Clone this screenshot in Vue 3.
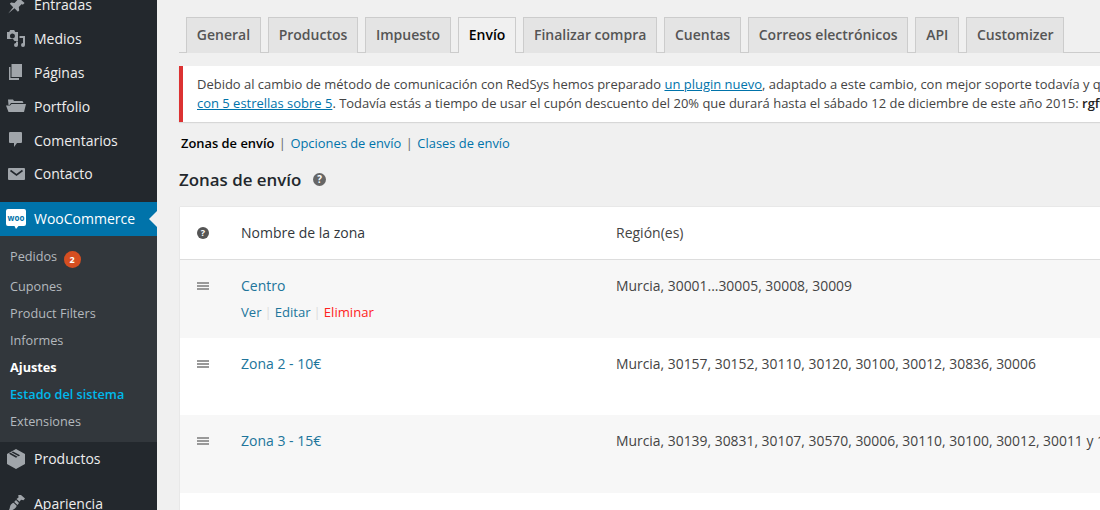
<script setup>
const menuTop = [
  { label: 'Entradas', icon: 'pin' },
  { label: 'Medios', icon: 'media' },
  { label: 'Páginas', icon: 'pages' },
  { label: 'Portfolio', icon: 'folder' },
  { label: 'Comentarios', icon: 'comment' },
  { label: 'Contacto', icon: 'mail' },
]
const sub = [
  { label: 'Pedidos', badge: '2', cls: 'first' },
  { label: 'Cupones' },
  { label: 'Product Filters' },
  { label: 'Informes' },
  { label: 'Ajustes', cls: 'current' },
  { label: 'Estado del sistema', cls: 'hover' },
  { label: 'Extensiones' },
]
const tabs = ['General', 'Productos', 'Impuesto', 'Envío', 'Finalizar compra', 'Cuentas', 'Correos electrónicos', 'API', 'Customizer']
const zones = [
  { name: 'Centro', region: 'Murcia, 30001...30005, 30008, 30009', actions: true },
  { name: 'Zona 2 - 10€', region: 'Murcia, 30157, 30152, 30110, 30120, 30100, 30012, 30836, 30006' },
  { name: 'Zona 3 - 15€', region: 'Murcia, 30139, 30831, 30107, 30570, 30006, 30110, 30100, 30012, 30011 y 1 más' },
]
</script>

<template>
  <div class="page">
    <aside class="sidebar">
      <ul class="menu">
        <li v-for="m in menuTop" :key="m.label" class="item">
          <svg class="ico" viewBox="0 0 20 20" aria-hidden="true">
            <path v-if="m.icon === 'pin'" d="M10.400 4.200l1.800-1.800 6.400 5.600-1.800 1.800-1-.8-3 3 .4 3.400-1.300 1.300-3.400-3.400L2.200 18.500l5-6.300-3.400-3.400 1.300-1.300 3.400.4 3-3z" />
            <path v-else-if="m.icon === 'media'" fill-rule="evenodd" d="M1 3h2.200l1-2h4l1 2H12v9H8.500L7 10H1V3zm5.500 1.500a2.500 2.500 0 1 0 0 5 2.500 2.500 0 0 0 0-5zM13.500 7H19v9a2 2 0 1 1-2-2V9h-3.500V7zM12 12.500v3.500a2 2 0 1 1-2-2V12.500h2z" />
            <path v-else-if="m.icon === 'pages'" d="M5.500 2H16v13H5.500V2zM3 5h1.500v11H13v2H3V5z" />
            <path v-else-if="m.icon === 'folder'" d="M2 3.500h5l1 1.500h8.500l1 2H5L3.500 9H2.500L2 3.500zM5.500 8H20l-2 8H2.500L0 9.500h4L5.500 8z" />
            <path v-else-if="m.icon === 'comment'" d="M4 2h11a1 1 0 0 1 1 1v9a1 1 0 0 1-1 1h-4l-3 4v-4H4a1 1 0 0 1-1-1V3a1 1 0 0 1 1-1z" />
            <template v-else>
              <path d="M3 4h15a1 1 0 0 1 1 1v10a1 1 0 0 1-1 1H3a1 1 0 0 1-1-1V5a1 1 0 0 1 1-1z" />
              <path d="M4.500 6.500l6 4.500 6-4.500" fill="none" stroke="#23282d" stroke-width="1.600" />
            </template>
          </svg>
          <span>{{ m.label }}</span>
        </li>
      </ul>
      <div class="woo">
        <svg class="woo-ico" viewBox="0 0 20 20" aria-hidden="true">
          <path d="M2 0h16a2 2 0 0 1 2 2v13a2 2 0 0 1-2 2h-5.500L10 20l-1.500-3H2a2 2 0 0 1-2-2V2a2 2 0 0 1 2-2z" fill="#fff" />
          <text x="10" y="11.500" text-anchor="middle" class="woo-t">woo</text>
        </svg>
        <span>WooCommerce</span>
        <i class="arrow"></i>
      </div>
      <ul class="submenu">
        <li v-for="s in sub" :key="s.label" :class="s.cls">
          {{ s.label }}<b v-if="s.badge" class="badge">{{ s.badge }}</b>
        </li>
      </ul>
      <div class="item prod">
        <svg class="ico" viewBox="0 0 20 20" aria-hidden="true">
          <path fill-rule="evenodd" d="M10 0l9 5v10l-9 5-9-5V5l9-5zM4.500 3.800L3 4.700l7 4 1.600-.9-7.100-4zM7 2.400L5.500 3.200l7.100 4 1.500-.9L7 2.400z" />
        </svg>
        <span>Productos</span>
      </div>
      <div class="item app">
        <svg class="ico" viewBox="0 0 20 20" aria-hidden="true">
          <path d="M15 2l4 3.500-1.500 1.700-2.500-.4-1.500 2L10.500 6l2-1.500-.2-2.500zM10 7l3 3-1.500 2-3.300-3zM7.500 9.800l3.200 3c-.7 2.500-3 4.700-8.700 5.200 2-1.500 1.700-3.700 2.300-5.200.6-1.500 1.600-2.500 3.200-3z" />
        </svg>
        <span>Apariencia</span>
      </div>
    </aside>

    <main class="main">
      <nav class="tabs">
        <a v-for="t in tabs" :key="t" class="tab" :class="{ active: t === 'Envío' }">{{ t }}</a>
      </nav>

      <div class="notice">
        <p>Debido al cambio de método de comunicación con RedSys hemos preparado <a>un plugin nuevo</a>, adaptado a este cambio, con mejor soporte todavía y que ya ha sido valorado</p>
        <p><a>con 5 estrellas sobre 5</a>. Todavía estás a tiempo de usar el cupón descuento del 20% que durará hasta el sábado 12 de diciembre de este año 2015: <strong>rgfwoo20</strong></p>
      </div>

      <div class="subnav">
        <strong>Zonas de envío</strong>
        <span class="sep">|</span>
        <a>Opciones de envío</a>
        <span class="sep">|</span>
        <a>Clases de envío</a>
      </div>

      <h2 class="title">
        Zonas de envío
        <svg class="help" viewBox="0 0 12 12" aria-hidden="true">
          <circle cx="6" cy="6" r="6" fill="#666" />
          <text x="6" y="9.300" text-anchor="middle" class="q">?</text>
        </svg>
      </h2>

      <section class="table">
        <div class="row head">
          <div class="c-handle">
            <svg class="help small" viewBox="0 0 12 12" aria-hidden="true">
              <circle cx="6" cy="6" r="6" fill="#555" />
              <text x="6" y="9.300" text-anchor="middle" class="q">?</text>
            </svg>
          </div>
          <div class="c-name">Nombre de la zona</div>
          <div class="c-region">Región(es)</div>
        </div>
        <div v-for="z in zones" :key="z.name" class="row zone">
          <div class="c-handle"><i class="handle"></i></div>
          <div class="c-name">
            <a class="zname">{{ z.name }}</a>
            <div v-if="z.actions" class="actions">
              <a>Ver</a><span class="bar">|</span><a>Editar</a><span class="bar">|</span><a class="del">Eliminar</a>
            </div>
          </div>
          <div class="c-region">{{ z.region }}</div>
        </div>
        <div class="row zone"></div>
      </section>
    </main>
  </div>
</template>

<style>
html, body { margin: 0; overflow: hidden; background: #f0f0f0; }
</style>

<style scoped>
.page {
  display: flex;
  width: 1100px;
  height: 510px;
  overflow: hidden;
  background: #f0f0f0;
  font-family: "Open Sans", sans-serif;
  font-size: 13px;
  color: #444;
}
ul { list-style: none; margin: 0; padding: 0; }
.sidebar {
  flex: 0 0 157px;
  width: 157px;
  height: 560px;
  margin-top: -12px;
  background: #23282d;
  color: #eee;
}
.menu { height: 214px; }
.item {
  display: flex;
  align-items: center;
  height: 33.800px;
  padding-left: 6px;
  font-size: 14px;
}
.item span { margin-left: 8px; }
.ico { width: 20px; height: 20px; fill: #a0a5aa; flex: none; }
.woo {
  position: relative;
  display: flex;
  align-items: center;
  box-sizing: border-box;
  height: 34px;
  padding: 0 0 1px 6px;
  background: #0073aa;
  color: #fff;
  font-size: 14px;
}
.woo span { margin-left: 8px; }
.woo-ico { width: 20px; height: 20px; flex: none; margin-top: 1px; }
.woo-t { fill: #0073aa; font-size: 8px; font-weight: 700; font-family: "Open Sans", sans-serif; }
.arrow {
  position: absolute;
  right: 0;
  top: 9px;
  border: 8px solid transparent;
  border-right-color: #f0f0f0;
  border-left-width: 0;
}
.submenu {
  height: 192px;
  padding: 7px 0;
  background: #32373c;
  color: #b4b9be;
  font-size: 12.700px;
}
.submenu li {
  height: 27px;
  line-height: 27px;
  padding-left: 10px;
}
.submenu .first { height: 29.500px; }
.submenu .current { color: #fff; font-weight: 700; }
.submenu .hover { color: #00b9eb; font-weight: 600; }
.badge {
  display: inline-block;
  width: 17px;
  height: 17px;
  margin-left: 6.500px;
  border-radius: 50%;
  background: #d54e21;
  color: #fff;
  font-size: 9px;
  line-height: 17px;
  text-align: center;
  vertical-align: -2px;
}
.prod { height: 34px; box-sizing: border-box; padding-bottom: 1px; }
.prod .ico { margin-top: 1px; }
.app { height: 34px; margin-top: 10px; }

.main {
  flex: 1;
  min-width: 0;
  padding: 17px 0 0 22px;
}
.tabs {
  display: flex;
  gap: 7px;
  height: 35px;
  padding-left: 7px;
  border-bottom: 1px solid #ccc;
  white-space: nowrap;
}
.tab {
  box-sizing: border-box;
  height: 36px;
  padding: 0 9.800px;
  border: 1px solid #ccc;
  border-bottom: 0;
  background: #e4e4e4;
  color: #555;
  font-size: 14px;
  font-weight: 600;
  line-height: 34px;
}
.tab.active {
  background: #f0f0f0;
  color: #000;
}
.notice {
  box-sizing: border-box;
  width: 1000px;
  height: 56px;
  margin-top: 13px;
  padding: 9px 0 0 14px;
  border-left: 4px solid #dc3232;
  background: #fff;
  box-shadow: 0 1px 1px rgba(0, 0, 0, .1);
  white-space: nowrap;
  font-size: 12.970px;
  line-height: 19px;
}
.notice p { margin: 0; }
.notice a { color: #0073aa; text-decoration: underline; }
.notice strong { color: #222; font-weight: 600; }
.subnav {
  display: flex;
  align-items: center;
  height: 20px;
  margin-top: 11px;
  padding-left: 2px;
  font-size: 12.900px;
  color: #666;
}
.subnav strong { color: #000; font-weight: 600; }
.subnav a { color: #0073aa; }
.sep { margin: 0 4.500px; color: #666; }
.title {
  display: flex;
  align-items: center;
  height: 22px;
  margin: 15px 0 17px;
  font-size: 16.900px;
  font-weight: 600;
  color: #23282d;
}
.help { width: 13px; height: 13px; margin-left: 12px; }
.help.small { width: 12px; height: 12px; margin: 2px 0 0; display: block; }
.q { fill: #fff; font-size: 9px; font-weight: 700; font-family: "Open Sans", sans-serif; }
.table {
  width: 1000px;
  margin-left: 1px;
  background: #fff;
  box-shadow: 0 0 1px rgba(0, 0, 0, .2);
}
.row { display: flex; box-sizing: border-box; }
.head {
  height: 53px;
  align-items: center;
  padding-bottom: 2px;
  border-bottom: 1px solid #ddd;
  font-size: 14px;
  color: #32373c;
}
.zone { height: 77.700px; padding-top: 16px; }
.zone:nth-child(even) { background: #f7f7f7; }
.c-handle { flex: 0 0 61px; padding-left: 17px; box-sizing: border-box; }
.c-name { flex: 0 0 375px; }
.c-region { flex: 1; white-space: nowrap; color: #444; }
.zone .c-region { font-size: 13.900px; line-height: 20px; }
.handle {
  display: block;
  width: 12px;
  height: 2px;
  margin-top: 6px;
  background: #999;
  box-shadow: 0 3px 0 #999, 0 6px 0 #999;
}
.zname { color: #21759b; font-size: 14px; line-height: 20px; display: block; }
.actions { margin-top: 7px; font-size: 13.100px; color: #ddd; }
.actions a { color: #21759b; }
.actions .del { color: #f22; }
.bar { margin: 0 3px; }
</style>
